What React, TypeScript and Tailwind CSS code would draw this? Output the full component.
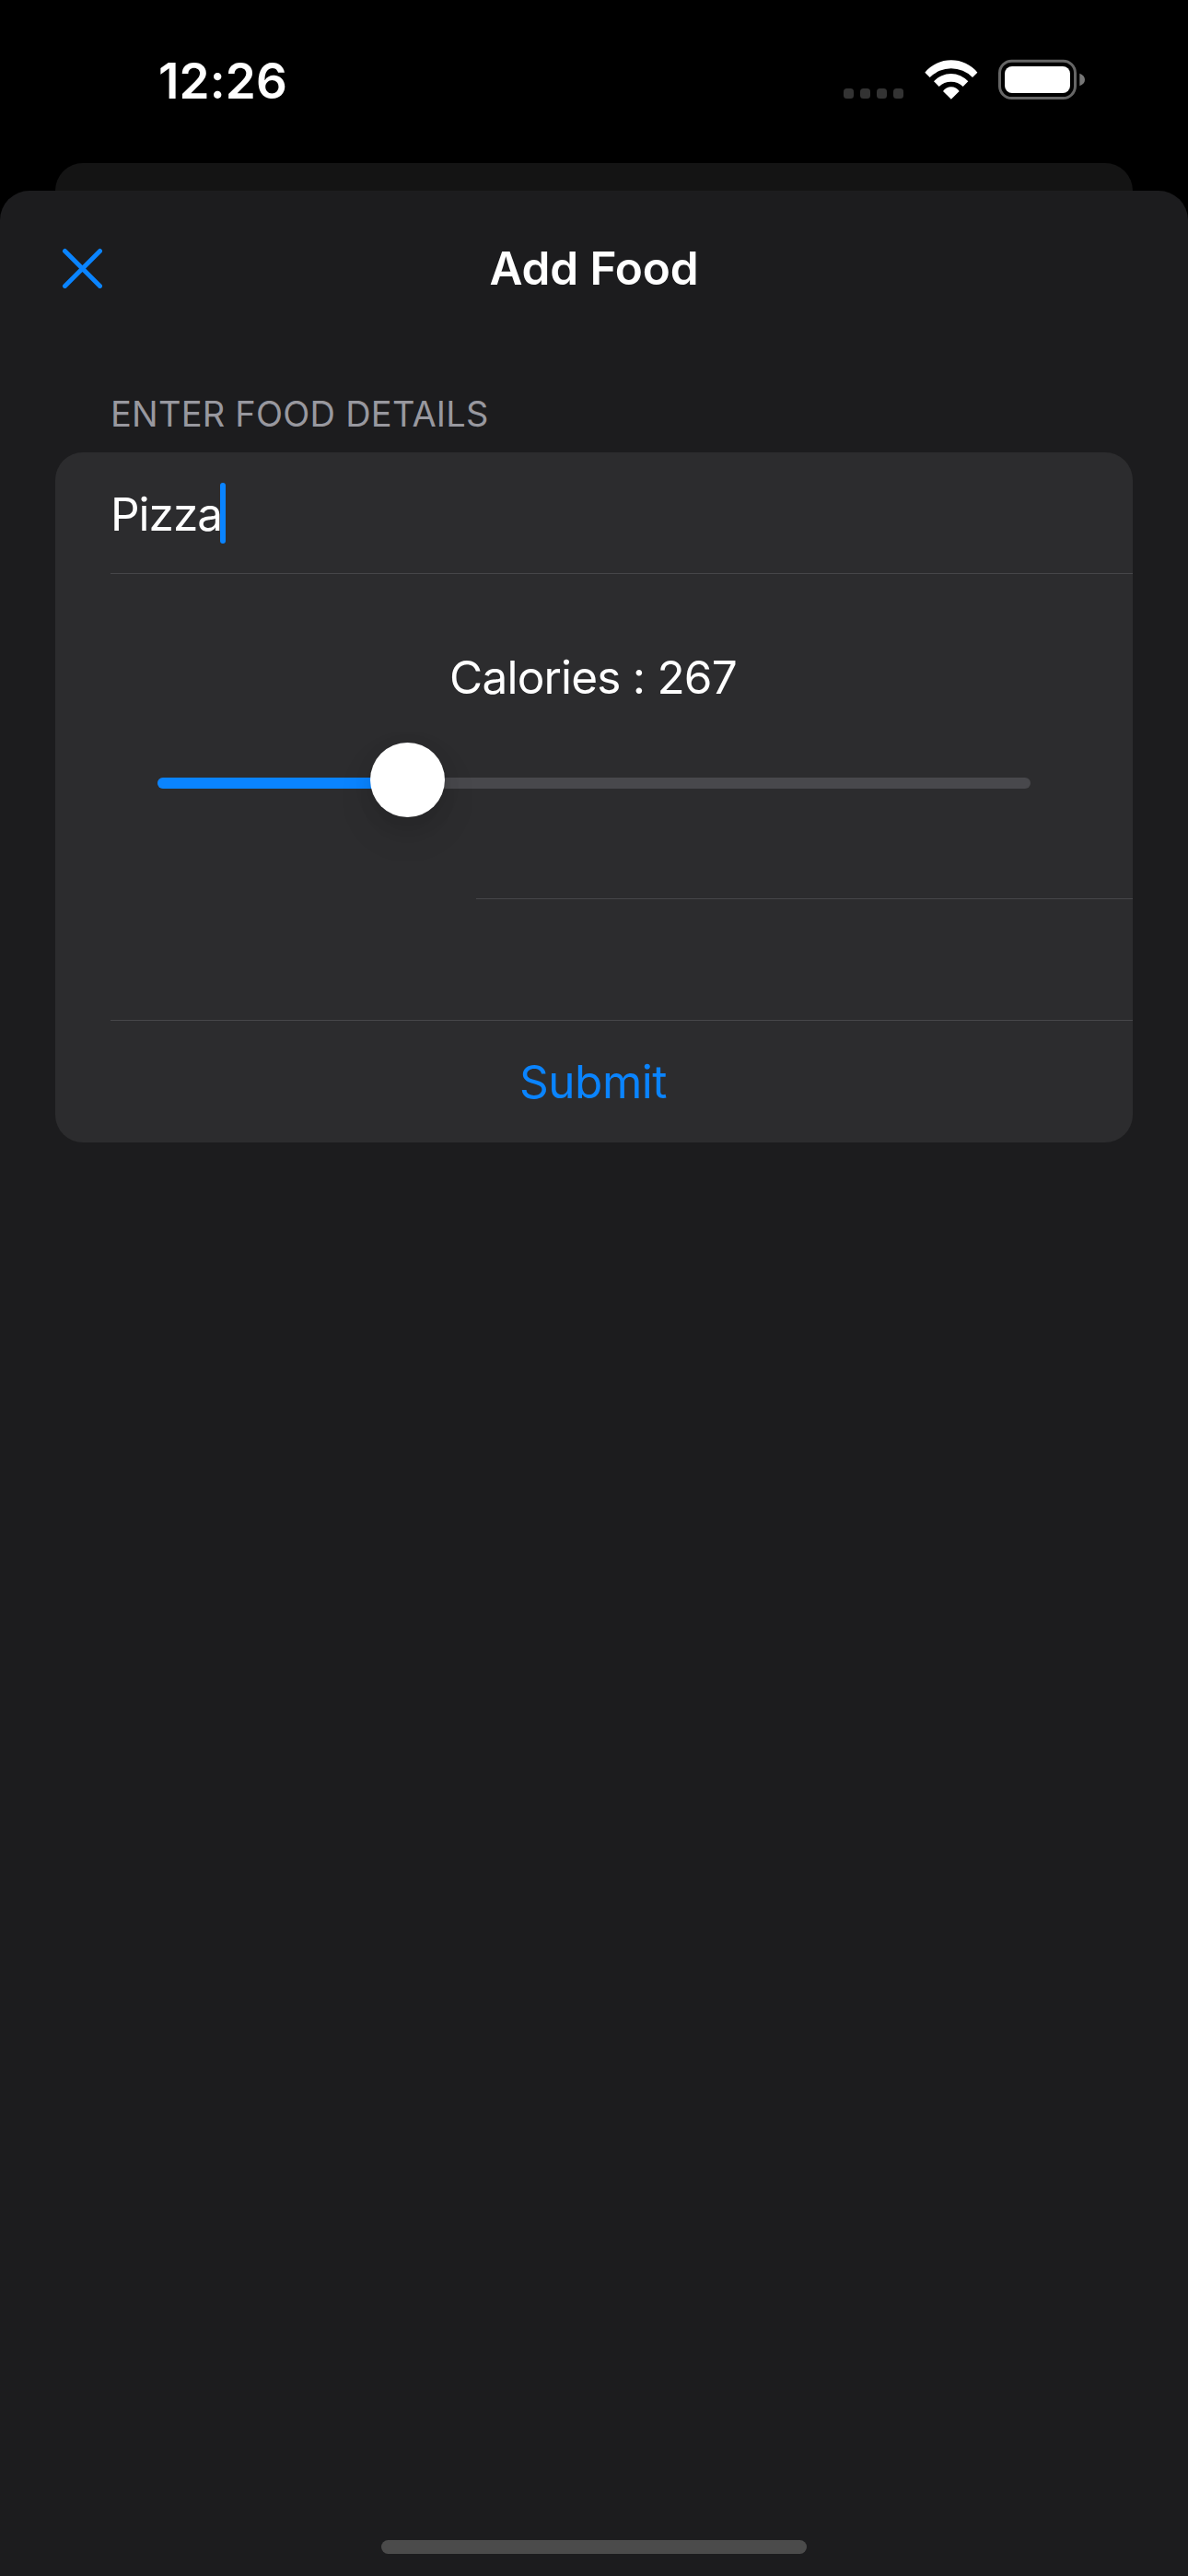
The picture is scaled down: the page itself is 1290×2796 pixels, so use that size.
function CellularDots() {
  return (
    <div className="mb-px flex gap-[7px]">
      {[0, 1, 2, 3].map((dot) => (
        <span key={dot} className="size-[11px] rounded-[3.5px] bg-[#333333]" />
      ))}
    </div>
  );
}

function WifiIcon() {
  return (
    <svg className="h-[43px] w-[58px]" viewBox="311 44 174 129" fill="white">
      <path d="M312 85A111.4 111.4 0 0 1 483 85L467 101A97.8 97.8 0 0 0 328 101Z" />
      <path d="M341 114A75 75 0 0 1 453 114L436 131A55.5 55.5 0 0 0 358 131Z" />
      <path d="M371 146A32 32 0 0 1 424 146L397.5 172Z" />
    </svg>
  );
}

function BatteryIcon() {
  return (
    <svg className="h-[44px] w-[95px]" viewBox="0 0 95 44" fill="none">
      <rect x="1.5" y="2.2" width="82" height="40.3" rx="13" stroke="#666666" strokeWidth="3" />
      <rect x="7" y="8" width="71" height="29" rx="8" fill="white" />
      <path d="M88.3 15.7C92 17 94 19.5 94 22.5S92 28 88.3 29.3Z" fill="#777777" />
    </svg>
  );
}

function StatusBar() {
  return (
    <header className="flex h-[177px] items-start justify-between pr-[111px] pl-[172px]">
      <time className="mt-[56px] text-[53px] leading-[64px] font-semibold tracking-[0.15px] text-white">
        12:26
      </time>
      <div className="mt-[64px] flex h-[44px] items-end">
        <CellularDots />
        <div className="ml-[23px]">
          <WifiIcon />
        </div>
        <div className="ml-[22px]">
          <BatteryIcon />
        </div>
      </div>
    </header>
  );
}

function CalorieSlider() {
  return (
    <div
      role="slider"
      aria-label="Calories"
      aria-valuenow={267}
      className="relative mx-[51px] mt-[41px] flex h-[81px] items-center px-[60px] pt-[7px]"
    >
      <div className="h-[12px] w-full overflow-hidden rounded-full bg-[#48484c]">
        <div className="h-full w-[271px] bg-[#0a84ff]" />
      </div>
      <span className="absolute top-0 left-[291px] size-[81px] rounded-full bg-white shadow-[0_18px_39px_rgba(0,0,0,0.1),0_6px_20px_rgba(0,0,0,0.08)]" />
    </div>
  );
}

export default function App() {
  return (
    <main className="flex h-[2796px] w-[1290px] flex-col bg-black font-['Inter',sans-serif]">
      <StatusBar />
      <div className="mx-[60px] h-[30px] rounded-t-[30px] bg-[#141414]" />
      <section className="flex flex-1 flex-col rounded-t-[32px] bg-[#1c1c1e]">
        <nav className="grid h-[168px] grid-cols-3 items-center px-[67px]">
          <button aria-label="Close" className="w-fit">
            <svg className="size-[44px]" viewBox="0 0 44 44" fill="none" stroke="#0a84ff" strokeWidth="5" strokeLinecap="round">
              <path d="M3.5 3.5L41.5 41.5M41.5 3.5L3.5 41.5" />
            </svg>
          </button>
          <h1 className="text-center text-[49.5px] leading-[60px] font-semibold tracking-[-0.15px] whitespace-nowrap text-white">
            Add Food
          </h1>
        </nav>

        <h2 className="mt-[50px] pl-[120px] text-[38px] leading-[48px] tracking-[0.23px] text-[#98989f]">
          ENTER FOOD DETAILS
        </h2>

        <form className="mx-[60px] mt-[18px] flex h-[749px] flex-col overflow-hidden rounded-[30px] bg-[#2c2c2e] text-[49.5px] leading-[60px] text-white">
          <div className="ml-[60px] flex h-[132px] items-center border-b border-[#464649]">
            <span className="mt-[2px] w-[119px] tracking-[-1px]">Pizza</span>
            <span className="h-[66px] w-[6px] rounded-[3px] bg-[#0a84ff]" />
          </div>
          <div className="h-[352px] pt-[82px]">
            <p className="pr-[2px] text-center tracking-[-0.8px]">Calories : 267</p>
            <CalorieSlider />
          </div>
          <div className="ml-[457px] h-px shrink-0 bg-[#464649]" />
          <div className="ml-[60px] h-[132px] border-b border-[#464649]" />
          <button type="button" className="flex-1 pr-[2px] text-center tracking-[-0.5px] text-[#0a84ff]">
            Submit
          </button>
        </form>

        <div className="mx-auto mt-auto mb-[24px] h-[15px] w-[462px] rounded-full bg-[#4b4b4b]" />
      </section>
    </main>
  );
}
